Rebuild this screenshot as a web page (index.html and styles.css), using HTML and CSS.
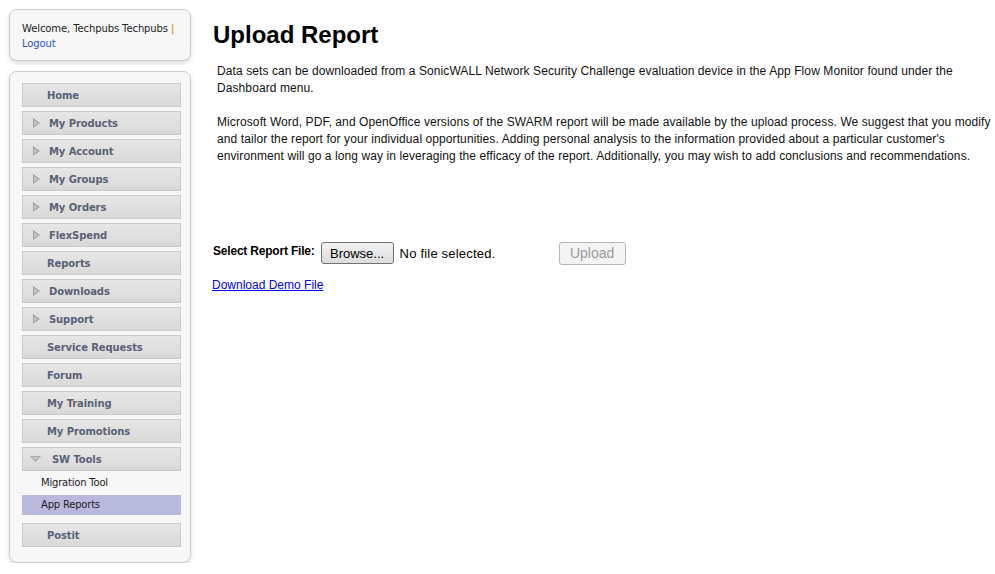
FILE: index.html
```html
<!DOCTYPE html>
<html lang="en">
<head>
    <meta charset="UTF-8">
    <title>Upload Report</title>
    <link rel="stylesheet" href="styles.css">
</head>
<body>
    <div class="sidebar">
        <div class="welcome">
            Welcome, Techpubs Techpubs <span class="sep">|</span><br>
            <a href="#" class="logout">Logout</a>
        </div>
        <div class="nav">
            <a href="#" class="nav-btn">Home</a>
            <a href="#" class="nav-btn has-arrow"><svg class="arrow" width="7" height="10" viewBox="0 0 7 10"><polygon points="0,0 7,5 0,10" fill="#a3a3a3"/><polygon points="1,2 5,5 1,8" fill="#c4c4c4"/></svg>My Products</a>
            <a href="#" class="nav-btn has-arrow"><svg class="arrow" width="7" height="10" viewBox="0 0 7 10"><polygon points="0,0 7,5 0,10" fill="#a3a3a3"/><polygon points="1,2 5,5 1,8" fill="#c4c4c4"/></svg>My Account</a>
            <a href="#" class="nav-btn has-arrow"><svg class="arrow" width="7" height="10" viewBox="0 0 7 10"><polygon points="0,0 7,5 0,10" fill="#a3a3a3"/><polygon points="1,2 5,5 1,8" fill="#c4c4c4"/></svg>My Groups</a>
            <a href="#" class="nav-btn has-arrow"><svg class="arrow" width="7" height="10" viewBox="0 0 7 10"><polygon points="0,0 7,5 0,10" fill="#a3a3a3"/><polygon points="1,2 5,5 1,8" fill="#c4c4c4"/></svg>My Orders</a>
            <a href="#" class="nav-btn has-arrow"><svg class="arrow" width="7" height="10" viewBox="0 0 7 10"><polygon points="0,0 7,5 0,10" fill="#a3a3a3"/><polygon points="1,2 5,5 1,8" fill="#c4c4c4"/></svg>FlexSpend</a>
            <a href="#" class="nav-btn">Reports</a>
            <a href="#" class="nav-btn has-arrow"><svg class="arrow" width="7" height="10" viewBox="0 0 7 10"><polygon points="0,0 7,5 0,10" fill="#a3a3a3"/><polygon points="1,2 5,5 1,8" fill="#c4c4c4"/></svg>Downloads</a>
            <a href="#" class="nav-btn has-arrow"><svg class="arrow" width="7" height="10" viewBox="0 0 7 10"><polygon points="0,0 7,5 0,10" fill="#a3a3a3"/><polygon points="1,2 5,5 1,8" fill="#c4c4c4"/></svg>Support</a>
            <a href="#" class="nav-btn">Service Requests</a>
            <a href="#" class="nav-btn">Forum</a>
            <a href="#" class="nav-btn">My Training</a>
            <a href="#" class="nav-btn">My Promotions</a>
            <a href="#" class="nav-btn open"><svg class="arrow-down" width="11" height="6" viewBox="0 0 11 6"><polygon points="0,0 11,0 5.5,6" fill="#a8a8a8"/><polygon points="2,1 9,1 5.5,4" fill="#c8c8c8"/></svg>SW Tools</a>
            <div class="sub">
                <a href="#" class="sub-item">Migration Tool</a>
                <a href="#" class="sub-item active">App Reports</a>
            </div>
            <a href="#" class="nav-btn">Postit</a>
        </div>
    </div>

    <div class="main">
        <h1>Upload Report</h1>
        <div class="intro">
            <p>Data sets can be downloaded from a SonicWALL Network Security Challenge evaluation device in the App Flow Monitor found under the Dashboard menu.</p>
            <p>Microsoft Word, PDF, and OpenOffice versions of the SWARM report will be made available by the upload process. We suggest that you modify and tailor the report for your individual opportunities. Adding personal analysis to the information provided about a particular customer's environment will go a long way in leveraging the efficacy of the report. Additionally, you may wish to add conclusions and recommendations.</p>
        </div>
        <div class="upload-row">
            <span class="upload-label">Select Report File:</span>
            <button class="browse">Browse...</button>
            <span class="file-name">No file selected.</span>
            <button class="upload" disabled>Upload</button>
        </div>
        <a href="#" class="demo-link">Download Demo File</a>
    </div>
</body>
</html>
```

FILE: styles.css
```css
body {
    margin: 0;
    display: flex;
    align-items: flex-start;
    background: #ffffff;
    font-family: "DejaVu Sans", Verdana, sans-serif;
}

.sidebar {
    width: 182px;
    padding: 9px 0 0 9px;
    display: flex;
    flex-direction: column;
    gap: 10px;
}

.welcome {
    background: #f7f7f7;
    border: 1px solid #cfcfcf;
    border-radius: 8px;
    box-shadow: 0 2px 4px rgba(0, 0, 0, 0.15);
    padding: 11px 12px 11px 12px;
    height: 28px;
    font-size: 10px;
    line-height: 15px;
    color: #222;
    letter-spacing: -0.1px;
}
.welcome .sep {
    color: #e07b00;
}
.logout {
    color: #2a55c8;
    text-decoration: none;
}

.nav {
    background: #f7f7f7;
    border: 1px solid #cfcfcf;
    border-radius: 8px;
    box-shadow: 0 2px 4px rgba(0, 0, 0, 0.15);
    padding: 11px 9px 15px 12px;
    display: flex;
    flex-direction: column;
    gap: 4px;
}

.nav-btn {
    display: flex;
    align-items: center;
    height: 22px;
    border: 1px solid #cbcbcb;
    background: linear-gradient(#e6e6e6, #d9d9d9);
    padding-left: 24px;
    font-size: 10px;
    font-weight: bold;
    color: #5a6276;
    text-decoration: none;
    letter-spacing: -0.1px;
}
.nav-btn.has-arrow {
    padding-left: 10px;
}
.nav-btn .arrow {
    margin-right: 9px;
}
.nav-btn.open {
    padding-left: 7px;
}
.nav-btn .arrow-down {
    margin-right: 11px;
}

.sub {
    display: flex;
    flex-direction: column;
    gap: 2px;
    margin-top: -2px;
    margin-bottom: 4px;
}
.sub-item {
    display: block;
    height: 20px;
    line-height: 20px;
    padding-left: 19px;
    font-size: 10px;
    color: #222;
    text-decoration: none;
    letter-spacing: -0.2px;
}
.sub-item.active {
    background: #b9b9dd;
}

.main {
    margin-left: 22px;
    padding-top: 20px;
    flex: 1;
    font-family: "Liberation Sans", Arial, sans-serif;
}

h1 {
    margin: 0 0 13px 0;
    font-size: 24px;
    line-height: 30px;
    font-weight: bold;
    color: #000;
}

.intro {
    padding-left: 4px;
    font-size: 12px;
    line-height: 17px;
    color: #111;
    letter-spacing: 0.09px;
}
.intro p {
    margin: 0 0 17px 0;
}

.upload-row {
    margin-top: 77px;
    display: flex;
    align-items: center;
    height: 22px;
}
.upload-label {
    font-size: 12px;
    font-weight: bold;
    letter-spacing: -0.2px;
    margin-right: 6px;
    margin-top: -4px;
}
.browse {
    width: 73px;
    height: 22px;
    font-family: "Liberation Sans", Arial, sans-serif;
    font-size: 13px;
    border: 1px solid #707070;
    border-radius: 3px;
    background: linear-gradient(#f3f3f3, #dcdcdc);
    color: #000;
    padding: 0;
}
.file-name {
    font-size: 13px;
    letter-spacing: 0.2px;
    margin-left: 6px;
    width: 159px;
}
.upload {
    width: 67px;
    height: 23px;
    font-family: "Liberation Sans", Arial, sans-serif;
    font-size: 14px;
    border: 1px solid #b5b5b5;
    border-radius: 3px;
    background: #f4f4f4;
    color: #9a9a9a;
    padding: 0;
}

.demo-link {
    display: inline-block;
    margin-top: 14px;
    font-size: 12px;
    color: #0000ee;
    margin-left: -1px;
}
```
